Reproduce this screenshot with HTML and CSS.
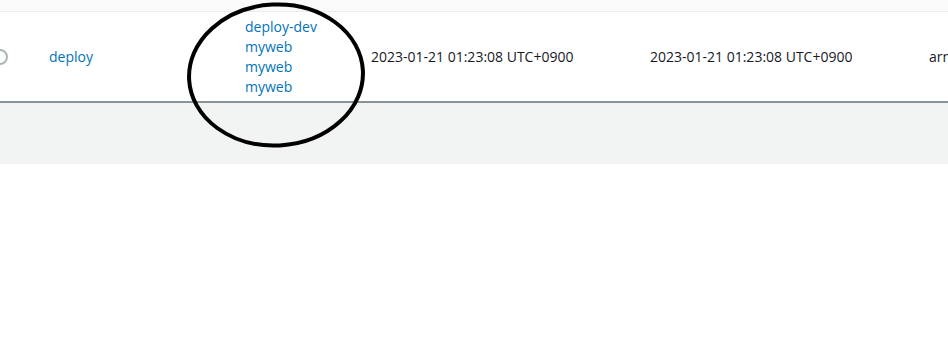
FILE: index.html
```html
<!DOCTYPE html>
<html>
<head>
<meta charset="utf-8">
<link rel="stylesheet" href="styles.css">
</head>
<body>
<div class="page">
  <div class="top-band"></div>
  <div class="row">
    <div class="cell cell-radio"><span class="radio"></span></div>
    <div class="cell cell-name"><a class="link">deploy</a></div>
    <div class="cell cell-links">
      <a class="link">deploy-dev</a>
      <a class="link">myweb</a>
      <a class="link">myweb</a>
      <a class="link">myweb</a>
    </div>
    <div class="cell cell-date">2023-01-21 01:23:08 UTC+0900</div>
    <div class="cell cell-date">2023-01-21 01:23:08 UTC+0900</div>
    <div class="cell cell-arn">arn</div>
  </div>
  <div class="footer-band"></div>
  <svg class="annotation" width="190" height="160" viewBox="0 0 190 160">
    <ellipse cx="90" cy="75" rx="87" ry="70.5" fill="none" stroke="#000" stroke-width="4" transform="rotate(-3 90 75)"/>
  </svg>
</div>
</body>
</html>
```

FILE: styles.css
```css
html, body {
  margin: 0;
  padding: 0;
  background: #ffffff;
}

.page {
  position: relative;
  width: 948px;
  height: 353px;
  overflow: hidden;
  font-family: "Open Sans", "Liberation Sans", sans-serif;
  font-size: 14px;
  color: #16191f;
}

.top-band {
  height: 11px;
  background: #fafafa;
  border-bottom: 1px solid #eaeded;
}

.row {
  display: grid;
  grid-template-columns: 49px 196px 126px 279px 279px 1fr;
  align-items: center;
  height: 89px;
  background: #ffffff;
  border-bottom: 2px solid #879596;
  white-space: nowrap;
}

.cell {
  line-height: 20px;
}

.cell-radio {
  display: flex;
  align-items: center;
}

.radio {
  display: block;
  box-sizing: border-box;
  width: 16px;
  height: 16px;
  margin-left: -8px;
  border: 2px solid #aab7b8;
  border-radius: 50%;
  background: #fff;
}

.cell-links {
  display: flex;
  flex-direction: column;
}

.link {
  color: #0073bb;
  text-decoration: none;
}

.footer-band {
  height: 61px;
  background: #f2f3f3;
}

.annotation {
  position: absolute;
  left: 186px;
  top: 0px;
}
```
